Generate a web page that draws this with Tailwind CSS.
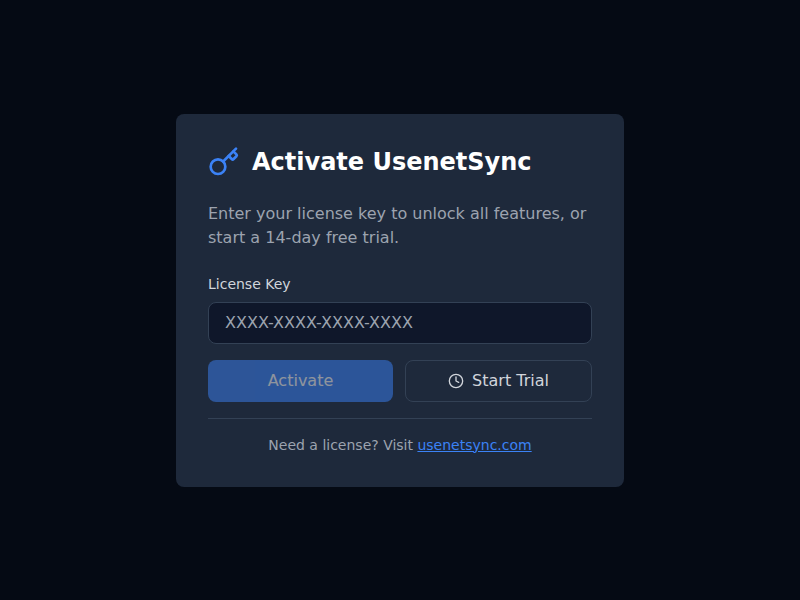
<!DOCTYPE html>
<html lang="en">
<head>
<meta charset="utf-8">
<title>Activate UsenetSync</title>
<script src="https://cdn.jsdelivr.net/npm/@tailwindcss/browser@4"></script>
</head>
<body class="min-h-screen bg-[#050a14] font-['DejaVu_Sans',sans-serif] flex items-center justify-center">
<main class="w-md rounded-lg bg-[#1e293b] p-8">
  <div class="mb-6 flex items-center gap-3">
    <svg class="size-8 text-[#3b82f6]" viewBox="0 0 24 24" fill="none" stroke="currentColor" stroke-width="2" stroke-linecap="round" stroke-linejoin="round"><path d="m15.5 7.5 2.3 2.3a1 1 0 0 0 1.4 0l2.1-2.1a1 1 0 0 0 0-1.4L19 4"/><path d="m21 2-9.6 9.6"/><circle cx="7.5" cy="15.5" r="5.5"/></svg>
    <h1 class="text-2xl font-bold text-white">Activate UsenetSync</h1>
  </div>
  <p class="mb-6 text-base text-[#9ca3af]">Enter your license key to unlock all features, or start a 14-day free trial.</p>
  <label for="key" class="mb-2 block text-sm text-[#d1d5db]">License Key</label>
  <input id="key" placeholder="XXXX-XXXX-XXXX-XXXX" class="block h-[42px] w-full rounded-lg border border-[#334155] bg-[#0f172a] px-4 text-base text-white placeholder:text-[#9ca3af]">
  <div class="mt-4 flex gap-3">
    <button disabled class="h-[42px] w-[185px] rounded-lg bg-[#3b82f6] text-white opacity-50">Activate</button>
    <button class="flex h-[42px] flex-1 items-center justify-center gap-2 rounded-lg border border-[#334155] text-[#d1d5db]">
      <svg class="size-4" viewBox="0 0 24 24" fill="none" stroke="currentColor" stroke-width="2" stroke-linecap="round" stroke-linejoin="round"><circle cx="12" cy="12" r="10"/><path d="M12 6v6l4 2"/></svg>
      Start Trial
    </button>
  </div>
  <div class="mt-4 border-t border-[#334155] pt-4 text-center text-sm text-[#9ca3af]">Need a license? Visit <a href="#" class="text-[#3b82f6] underline">usenetsync.com</a></div>
</main>
</body>
</html>
